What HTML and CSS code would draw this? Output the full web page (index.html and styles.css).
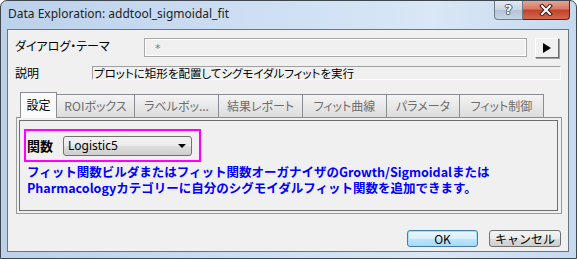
FILE: index.html
```html
<!DOCTYPE html>
<html lang="ja">
<head>
    <meta charset="UTF-8">
    <title>Data Exploration: addtool_sigmoidal_fit</title>
    <link rel="stylesheet" href="styles.css">
</head>
<body>
    <div class="window">
        <div class="titlebar">
            <span class="title">Data Exploration: addtool_sigmoidal_fit</span>
            <div class="caption-buttons">
                <div class="cap-help">?</div>
                <div class="cap-close">
                    <svg width="14" height="12" viewBox="0 0 14 12">
                        <path d="M3 2 L11 10 M11 2 L3 10" stroke="#3a1a14" stroke-width="4" stroke-linecap="square"/>
                        <path d="M3 2 L11 10 M11 2 L3 10" stroke="#fff" stroke-width="2" stroke-linecap="square"/>
                    </svg>
                </div>
            </div>
        </div>

        <div class="client">
            <div class="theme-row">
                <span class="label">ダイアログ・テーマ</span>
                <div class="theme-input">*</div>
                <div class="theme-btn">
                    <svg width="8" height="10" viewBox="0 0 8 10"><path d="M0 0 L8 5 L0 10 Z" fill="#000"/></svg>
                </div>
            </div>

            <div class="desc-row">
                <span class="label">説明</span>
                <div class="desc-box">プロットに矩形を配置してシグモイダルフィットを実行</div>
            </div>

            <div class="tabs">
                <div class="tab active">設定</div>
                <div class="tab w78">ROIボックス</div>
                <div class="tab">ラベルボッ...</div>
                <div class="tab">結果レポート</div>
                <div class="tab">フィット曲線</div>
                <div class="tab w73">パラメータ</div>
                <div class="tab">フィット制御</div>
            </div>

            <div class="panel">
                <div class="panel-inner">
                    <div class="func-box">
                        <span class="func-label">関数</span>
                        <div class="dropdown">
                            <span>Logistic5</span>
                            <svg width="8" height="4" viewBox="0 0 8 4"><path d="M0 0 L8 0 L4 4 Z" fill="#000"/></svg>
                        </div>
                    </div>
                    <div class="note">
                        <span class="note-line">フィット関数ビルダまたはフィット関数オーガナイザのGrowth/Sigmoidalまたは</span>
                        <span class="note-line">Pharmacologyカテゴリーに自分のシグモイダルフィット関数を追加できます。</span>
                    </div>
                </div>
            </div>

            <div class="footer">
                <button class="btn default">OK</button>
                <button class="btn">キャンセル</button>
            </div>
        </div>
    </div>
</body>
</html>
```

FILE: styles.css
```css
body {
    margin: 0;
    font-family: "Noto Sans CJK JP", "Noto Sans", sans-serif;
    font-size: 12px;
    color: #000;
    background: #fff;
}
.window {
    width: 577px;
    height: 259px;
    box-sizing: border-box;
    border: 1px solid #3e4650;
    border-radius: 7px 7px 0 0;
    background: linear-gradient(to right, #bcd1ea 0%, #cddff3 45%, #d9e7f6 75%, #c6d9ef 100%);
    display: flex;
    flex-direction: column;
    overflow: hidden;
}
.titlebar {
    height: 28px;
    display: flex;
    justify-content: space-between;
    align-items: flex-start;
    padding-left: 7px;
}
.title {
    font-family: "Noto Sans", sans-serif;
    font-size: 12px;
    line-height: 25px;
    color: #1e1e1e;
}
.caption-buttons {
    display: flex;
    margin-top: -1px;
    margin-right: 6px;
}
.cap-help {
    width: 27px;
    height: 19px;
    border: 1px solid #707c8a;
    border-top: none;
    border-radius: 0 0 0 4px;
    background: linear-gradient(#e4ebf3 0%, #cbd6e2 50%, #b3c2d3 51%, #c8d5e3 100%);
    color: #fff;
    font-family: "DejaVu Sans", sans-serif;
    font-weight: bold;
    font-size: 13px;
    line-height: 19px;
    text-align: center;
    text-shadow: 1px 0 0 #4a5564, -1px 0 0 #4a5564, 0 1px 0 #4a5564, 0 -1px 0 #4a5564;
}
.cap-close {
    width: 46px;
    height: 19px;
    border: 1px solid #5a2419;
    border-left: none;
    border-top: none;
    border-radius: 0 0 4px 0;
    background: linear-gradient(#e9a999 0%, #d97a66 45%, #c4442b 55%, #d4674d 100%);
    display: flex;
    justify-content: center;
    align-items: center;
}
.client {
    flex: 1;
    margin: 0 7px 6px 6px;
    border: 1px solid #6b7480;
    background: #f0f0f0;
    display: flex;
    flex-direction: column;
    font-feature-settings: "palt";
}
.theme-row {
    display: flex;
    align-items: flex-start;
    margin-top: 8px;
    height: 20px;
}
.label {
    padding-left: 7px;
    line-height: 14px;
}
.theme-row .label {
    width: 129px;
    margin-top: 1px;
}
.theme-input {
    width: 383px;
    height: 19px;
    box-sizing: border-box;
    border: 1px solid #a9a9a9;
    box-shadow: inset 0 0 0 1px #fff;
    color: #7a7a7a;
    padding-left: 10px;
    line-height: 19px;
    font-family: "DejaVu Sans", sans-serif;
    font-size: 11px;
}
.theme-btn {
    width: 24px;
    height: 20px;
    box-sizing: border-box;
    margin-left: 8px;
    border: 1px solid;
    border-color: #fff #6d6d6d #6d6d6d #fff;
    box-shadow: 1px 1px 0 #a0a0a0;
    display: flex;
    justify-content: center;
    align-items: center;
}
.desc-row {
    display: flex;
    align-items: center;
    margin-top: 8px;
    height: 14px;
}
.desc-row .label {
    width: 77px;
}
.desc-box {
    width: 469px;
    height: 14px;
    box-sizing: border-box;
    border: 1px solid;
    border-color: #a0a0a0 #fff #fff #a0a0a0;
    font-size: 11.5px;
    line-height: 12px;
    padding-left: 1px;
    white-space: nowrap;
}
.tabs {
    display: flex;
    align-items: flex-end;
    margin-top: 12px;
    margin-left: 14px;
    height: 25px;
    position: relative;
    z-index: 1;
}
.tab {
    width: 85px;
    height: 23px;
    box-sizing: border-box;
    border: 1px solid #898c95;
    border-bottom: none;
    margin-left: -1px;
    background: linear-gradient(#f4f4f4, #dcdcdc);
    color: #6d6d6d;
    text-align: center;
    line-height: 22px;
    white-space: nowrap;
}
.tab.w78 {
    width: 79px;
}
.tab.w73 {
    width: 74px;
}
.tab.active {
    width: 37px;
    height: 26px;
    margin-left: -2px;
    margin-bottom: -1px;
    background: #fbfbfb;
    color: #000;
    line-height: 24px;
    position: relative;
    z-index: 2;
}
.panel {
    margin-left: 8px;
    width: 546px;
    height: 97px;
    box-sizing: border-box;
    border: 1px solid #9a9a9a;
    border-top-color: #898c95;
    padding: 2px 3px 2px 2px;
    display: flex;
}
.panel-inner {
    flex: 1;
    border: 1px solid #6d6d6d;
}
.func-box {
    width: 177px;
    height: 33px;
    box-sizing: border-box;
    margin: 8px 0 0 4px;
    border: 2px solid #ff00ff;
    display: flex;
    align-items: center;
    padding-left: 1px;
}
.func-label {
    width: 36px;
    font-weight: bold;
    font-size: 13px;
}
.dropdown {
    width: 129px;
    height: 20px;
    box-sizing: border-box;
    border: 1px solid #707070;
    border-radius: 3px;
    background: linear-gradient(#f2f2f2 0%, #ebebeb 50%, #dddddd 51%, #cfcfcf 100%);
    display: flex;
    justify-content: space-between;
    align-items: center;
    padding: 0 5px 0 4px;
    font-family: "Noto Sans", sans-serif;
    font-size: 12px;
}
.note {
    margin: 2px 0 0 7px;
    color: #0000ff;
    font-weight: bold;
    font-size: 12.5px;
    font-feature-settings: normal;
    white-space: nowrap;
}
.note-line {
    display: block;
    height: 16px;
    line-height: 15px;
}
.footer {
    display: flex;
    justify-content: flex-end;
    gap: 11px;
    margin-top: 16px;
    padding-right: 7px;
}
.btn {
    width: 72px;
    height: 17px;
    box-sizing: border-box;
    border: 1px solid #707070;
    border-radius: 3px;
    background: linear-gradient(#f2f2f2 0%, #ebebeb 50%, #dddddd 51%, #cfcfcf 100%);
    font-family: "Noto Sans CJK JP", sans-serif;
    font-size: 12px;
    line-height: 13px;
    padding: 0;
    color: #000;
}
.btn.default {
    width: 71px;
    border-color: #3c7fb1;
    box-shadow: inset 0 0 0 1px #a8dcf8;
    background: linear-gradient(#eaf6fd 0%, #d9f0fc 50%, #bee6fd 51%, #a7d9f5 100%);
}
```
